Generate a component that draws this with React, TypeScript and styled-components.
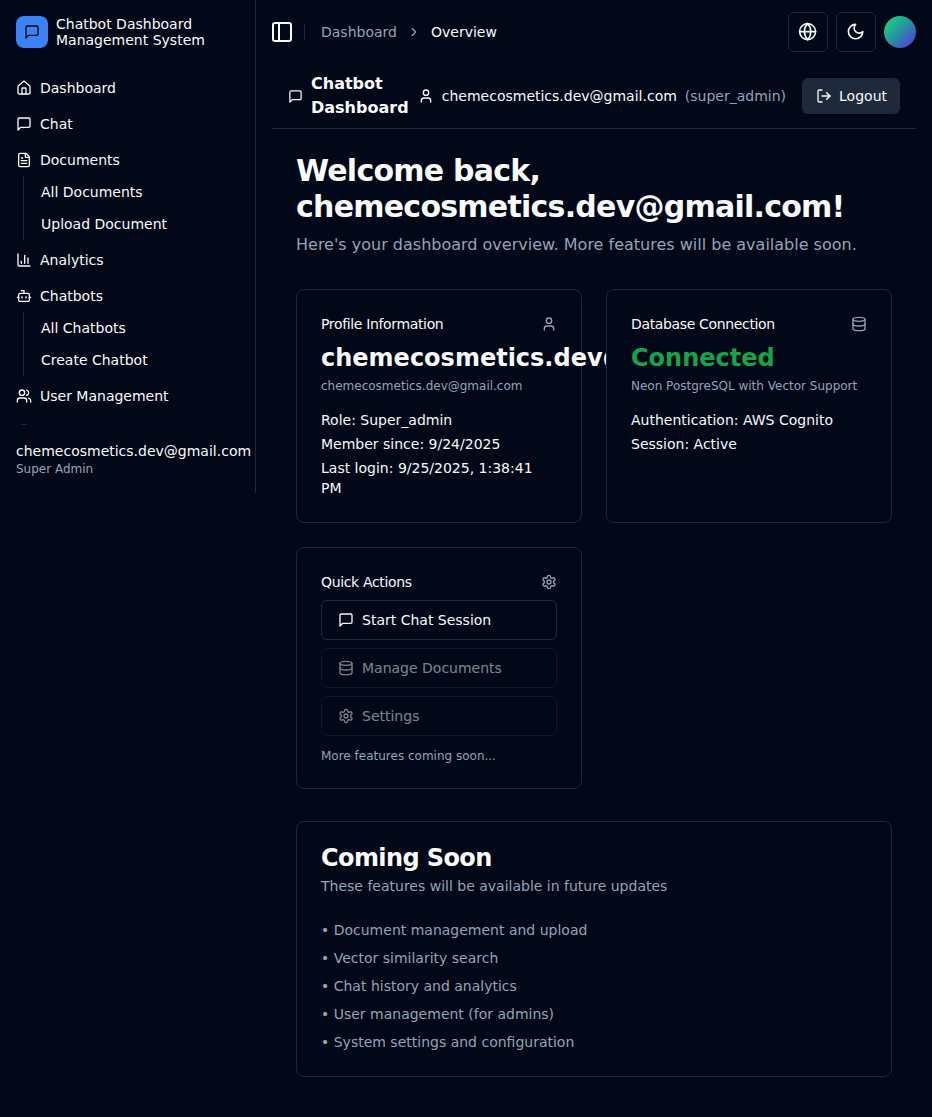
import React from "react";
import styled, { createGlobalStyle } from "styled-components";
import {
  Bot,
  ChartColumn,
  ChevronRight,
  Database,
  FileText,
  Globe,
  House,
  LogOut,
  PanelLeft,
  User,
  Users,
} from "lucide-react";

const colors = {
  bg: "#020817",
  fg: "#f8fafc",
  border: "#1e293b",
  muted: "#94a3b8",
  blue: "#3b82f6",
  green: "#16a34a",
};

const GlobalStyle = createGlobalStyle`
  * {
    box-sizing: border-box;
  }

  html, body {
    margin: 0;
    background: ${colors.bg};
    color: ${colors.fg};
    font-family: "DejaVu Sans", sans-serif;
    font-size: 14px;
    line-height: 20px;
  }
`;

type IconProps = { size?: number; color?: string };

// the older lucide shapes, the installed version draws these three differently
const LineIcon = ({ size = 16, color = "currentColor", children }: IconProps & { children: React.ReactNode }) => (
  <svg
    width={size}
    height={size}
    viewBox="0 0 24 24"
    fill="none"
    stroke={color}
    strokeWidth={2}
    strokeLinecap="round"
    strokeLinejoin="round"
  >
    {children}
  </svg>
);

const MessageSquare = (props: IconProps) => (
  <LineIcon {...props}>
    <path d="M21 15a2 2 0 0 1-2 2H7l-4 4V5a2 2 0 0 1 2-2h14a2 2 0 0 1 2 2z" />
  </LineIcon>
);

const Moon = (props: IconProps) => (
  <LineIcon {...props}>
    <path d="M12 3a6 6 0 0 0 9 9 9 9 0 1 1-9-9Z" />
  </LineIcon>
);

const Settings = (props: IconProps) => (
  <LineIcon {...props}>
    <path d="M12.22 2h-.44a2 2 0 0 0-2 2v.18a2 2 0 0 1-1 1.73l-.43.25a2 2 0 0 1-2 0l-.15-.08a2 2 0 0 0-2.73.73l-.22.38a2 2 0 0 0 .73 2.73l.15.1a2 2 0 0 1 1 1.72v.51a2 2 0 0 1-1 1.74l-.15.09a2 2 0 0 0-.73 2.73l.22.38a2 2 0 0 0 2.73.73l.15-.08a2 2 0 0 1 2 0l.43.25a2 2 0 0 1 1 1.73V20a2 2 0 0 0 2 2h.44a2 2 0 0 0 2-2v-.18a2 2 0 0 1 1-1.73l.43-.25a2 2 0 0 1 2 0l.15.08a2 2 0 0 0 2.73-.73l.22-.39a2 2 0 0 0-.73-2.73l-.15-.08a2 2 0 0 1-1-1.74v-.5a2 2 0 0 1 1-1.74l.15-.09a2 2 0 0 0 .73-2.73l-.22-.38a2 2 0 0 0-2.73-.73l-.15.08a2 2 0 0 1-2 0l-.43-.25a2 2 0 0 1-1-1.73V4a2 2 0 0 0-2-2z" />
    <circle cx="12" cy="12" r="3" />
  </LineIcon>
);

const navTop = [
  { label: "Dashboard", icon: House },
  { label: "Chat", icon: MessageSquare },
];

export default function App() {
  return (
    <Shell>
      <GlobalStyle />
      <Sidebar>
        <Brand>
          <BrandMark>
            <MessageSquare size={16} />
          </BrandMark>
          <BrandName>
            Chatbot Dashboard
            <br />
            Management System
          </BrandName>
        </Brand>
        <Nav>
          {navTop.map((item) => (
            <NavItem key={item.label}>
              <item.icon size={16} />
              {item.label}
            </NavItem>
          ))}
          <div>
            <NavItem>
              <FileText size={16} />
              Documents
            </NavItem>
            <SubNav>
              <SubItem>All Documents</SubItem>
              <SubItem>Upload Document</SubItem>
            </SubNav>
          </div>
          <NavItem>
            <ChartColumn size={16} />
            Analytics
          </NavItem>
          <div>
            <NavItem>
              <Bot size={16} />
              Chatbots
            </NavItem>
            <SubNav>
              <SubItem>All Chatbots</SubItem>
              <SubItem>Create Chatbot</SubItem>
            </SubNav>
          </div>
          <NavItem>
            <Users size={16} />
            User Management
          </NavItem>
        </Nav>
        <SideRule />
        <SideUser>
          <SideEmail>chemecosmetics.dev@gmail.com</SideEmail>
          <SideRole>Super Admin</SideRole>
        </SideUser>
      </Sidebar>

      <Main>
        <TopBar>
          <TopLeft>
            <ToggleIcon>
              <PanelLeft size={24} color={colors.fg} />
            </ToggleIcon>
            <TopDivider />
            <Crumb>Dashboard</Crumb>
            <ChevronRight size={14} color={colors.muted} />
            <CrumbCurrent>Overview</CrumbCurrent>
          </TopLeft>
          <TopRight>
            <SquareButton>
              <Globe size={19.2} />
            </SquareButton>
            <SquareButton>
              <Moon size={19.2} />
            </SquareButton>
            <Avatar />
          </TopRight>
        </TopBar>

        <Page>
          <PageHeader>
            <HeaderTitle>
              <HeaderIcon>
                <MessageSquare size={15} />
              </HeaderIcon>
              <HeaderName>Chatbot Dashboard</HeaderName>
            </HeaderTitle>
            <HeaderUser>
              <User size={16} />
              <span>chemecosmetics.dev@gmail.com</span>
              <HeaderRole>(super_admin)</HeaderRole>
              <LogoutButton>
                <LogOut size={16} />
                Logout
              </LogoutButton>
            </HeaderUser>
          </PageHeader>

          <Content>
            <Welcome>Welcome back, chemecosmetics.dev@gmail.com!</Welcome>
            <Lead>Here's your dashboard overview. More features will be available soon.</Lead>

            <CardGrid>
              <Card>
                <CardHead>
                  <CardLabel>Profile Information</CardLabel>
                  <User size={16} color={colors.muted} />
                </CardHead>
                <BigValue>chemecosmetics.dev@gmail.com</BigValue>
                <Small>chemecosmetics.dev@gmail.com</Small>
                <Details>
                  <div>Role: Super_admin</div>
                  <div>Member since: 9/24/2025</div>
                  <div>Last login: 9/25/2025, 1:38:41 PM</div>
                </Details>
              </Card>

              <Card>
                <CardHead>
                  <CardLabel>Database Connection</CardLabel>
                  <Database size={16} color={colors.muted} />
                </CardHead>
                <BigValue $green>Connected</BigValue>
                <Small>Neon PostgreSQL with Vector Support</Small>
                <Details>
                  <div>Authentication: AWS Cognito</div>
                  <div>Session: Active</div>
                </Details>
              </Card>

              <Card>
                <CardHead>
                  <CardLabel>Quick Actions</CardLabel>
                  <Settings size={16} color={colors.muted} />
                </CardHead>
                <Actions>
                  <ActionButton>
                    <MessageSquare size={16} />
                    Start Chat Session
                  </ActionButton>
                  <ActionButton disabled>
                    <Database size={16} />
                    Manage Documents
                  </ActionButton>
                  <ActionButton disabled>
                    <Settings size={16} />
                    Settings
                  </ActionButton>
                </Actions>
                <ActionNote>More features coming soon...</ActionNote>
              </Card>
            </CardGrid>

            <SoonCard>
              <SoonTitle>Coming Soon</SoonTitle>
              <SoonLead>These features will be available in future updates</SoonLead>
              <SoonList>
                <div>• Document management and upload</div>
                <div>• Vector similarity search</div>
                <div>• Chat history and analytics</div>
                <div>• User management (for admins)</div>
                <div>• System settings and configuration</div>
              </SoonList>
            </SoonCard>
          </Content>
        </Page>
      </Main>
    </Shell>
  );
}

const Shell = styled.div`
  display: flex;
  align-items: flex-start;
  min-height: 100vh;
`;

const Sidebar = styled.aside`
  flex: 0 0 256px;
  width: 256px;
  height: 493px;
  border-right: 1px solid ${colors.border};
`;

const Brand = styled.div`
  display: flex;
  align-items: center;
  gap: 8px;
  padding: 16px 16px 0;
`;

const BrandMark = styled.div`
  display: flex;
  align-items: center;
  justify-content: center;
  width: 32px;
  height: 32px;
  border-radius: 8px;
  background: ${colors.blue};
  color: ${colors.bg};
`;

const BrandName = styled.div`
  line-height: 16px;
  white-space: nowrap;
`;

const Nav = styled.nav`
  display: flex;
  flex-direction: column;
  gap: 4px;
  margin-top: 24px;
  padding: 0 8px;
`;

const NavItem = styled.div`
  display: flex;
  align-items: center;
  gap: 8px;
  height: 32px;
  padding: 0 8px;
  svg {
    flex-shrink: 0;
  }
`;

const SubNav = styled.div`
  margin-left: 15px;
  padding-left: 10px;
  border-left: 1px solid ${colors.border};
`;

const SubItem = styled.div`
  display: flex;
  align-items: center;
  height: 32px;
  padding: 0 7px;
`;

const SideRule = styled.div`
  width: 6px;
  height: 1px;
  margin: 12px 0 0 21px;
  background: ${colors.border};
`;

const SideUser = styled.div`
  padding: 16px 0 0 16px;
`;

const SideEmail = styled.div`
  white-space: nowrap;
`;

const SideRole = styled.div`
  font-size: 12px;
  line-height: 16px;
  color: ${colors.muted};
`;

const Main = styled.main`
  flex: 1;
  min-width: 0;
`;

const TopBar = styled.header`
  display: flex;
  align-items: center;
  justify-content: space-between;
  height: 64px;
  padding: 0 16px;
`;

const TopLeft = styled.div`
  display: flex;
  align-items: center;
  gap: 10px;
`;

const ToggleIcon = styled.span`
  display: flex;
  margin-left: -2px;
`;

const TopDivider = styled.div`
  width: 1px;
  height: 16px;
  margin-right: 6px;
  background: ${colors.border};
`;

const Crumb = styled.span`
  color: ${colors.muted};
`;

const CrumbCurrent = styled.span`
  color: ${colors.fg};
`;

const TopRight = styled.div`
  display: flex;
  align-items: center;
  gap: 8px;
`;

const SquareButton = styled.button`
  display: flex;
  align-items: center;
  justify-content: center;
  width: 40px;
  height: 40px;
  padding: 0;
  border: 1px solid ${colors.border};
  border-radius: 6px;
  background: transparent;
  color: ${colors.fg};
`;

const Avatar = styled.div`
  width: 32px;
  height: 32px;
  border-radius: 50%;
  background: linear-gradient(135deg, #22dc78 0%, #2394a0 50%, #6128e8 100%);
`;

const Page = styled.div`
  padding: 0 16px 16px;
`;

const PageHeader = styled.div`
  display: flex;
  align-items: center;
  justify-content: space-between;
  height: 65px;
  padding: 0 16px;
  border-bottom: 1px solid ${colors.border};
`;

const HeaderTitle = styled.div`
  display: flex;
  align-items: center;
  gap: 8px;
`;

const HeaderIcon = styled.span`
  display: flex;
  flex-shrink: 0;
`;

const HeaderName = styled.h1`
  margin: 0;
  font-size: 16px;
  line-height: 24px;
  font-weight: 700;
`;

const HeaderUser = styled.div`
  display: flex;
  align-items: center;
  flex-shrink: 0;
  gap: 8px;
  white-space: nowrap;
`;

const HeaderRole = styled.span`
  color: ${colors.muted};
`;

const LogoutButton = styled.button`
  display: flex;
  align-items: center;
  gap: 7px;
  height: 36px;
  margin-left: 8px;
  padding: 0 13px 0 14px;
  border: 0;
  border-radius: 6px;
  background: ${colors.border};
  color: ${colors.fg};
  font: inherit;
`;

const Content = styled.div`
  padding: 24px;
`;

const Welcome = styled.h2`
  margin: 0;
  font-size: 30px;
  line-height: 36px;
  font-weight: 700;
  letter-spacing: -0.025em;
`;

const Lead = styled.p`
  margin: 8px 0 0;
  font-size: 16px;
  line-height: 24px;
  color: ${colors.muted};
`;

const CardGrid = styled.div`
  display: grid;
  grid-template-columns: repeat(2, 1fr);
  gap: 24px;
  margin-top: 32px;
`;

const Card = styled.section`
  min-width: 0;
  padding: 24px;
  border: 1px solid ${colors.border};
  border-radius: 8px;
  background: ${colors.bg};
`;

const CardHead = styled.div`
  display: flex;
  align-items: center;
  justify-content: space-between;
  height: 20px;
  margin-bottom: 8px;
`;

const CardLabel = styled.span`
  font-weight: 500;
  letter-spacing: -0.025em;
`;

const BigValue = styled.div<{ $green?: boolean }>`
  font-size: 24px;
  line-height: 32px;
  font-weight: 700;
  white-space: nowrap;
  color: ${(p) => (p.$green ? colors.green : colors.fg)};
`;

const Small = styled.p`
  margin: 4px 0 0;
  font-size: 12px;
  line-height: 16px;
  color: ${colors.muted};
`;

const Details = styled.div`
  display: flex;
  flex-direction: column;
  gap: 4px;
  margin-top: 16px;
`;

const Actions = styled.div`
  display: flex;
  flex-direction: column;
  gap: 8px;
`;

const ActionButton = styled.button`
  display: flex;
  align-items: center;
  gap: 8px;
  height: 40px;
  padding: 0 16px;
  border: 1px solid ${colors.border};
  border-radius: 6px;
  background: transparent;
  color: ${colors.fg};
  font: inherit;

  &:disabled {
    opacity: 0.5;
  }
`;

const ActionNote = styled.p`
  margin: 12px 0 0;
  font-size: 12px;
  line-height: 16px;
  color: ${colors.muted};
`;

const SoonCard = styled(Card)`
  margin-top: 32px;
`;

const SoonTitle = styled.h3`
  margin: 0;
  font-size: 24px;
  line-height: 24px;
  font-weight: 700;
  letter-spacing: -0.025em;
`;

const SoonLead = styled.p`
  margin: 6px 0 0;
  color: ${colors.muted};
`;

const SoonList = styled.div`
  display: flex;
  flex-direction: column;
  gap: 8px;
  margin-top: 24px;
  color: ${colors.muted};
`;
